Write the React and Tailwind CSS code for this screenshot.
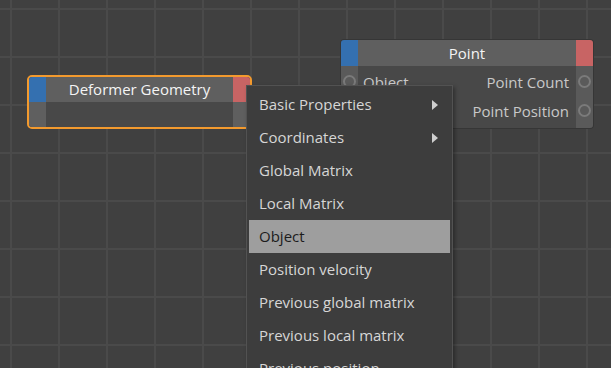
import React from "react";

const items = [
  { label: "Basic Properties", arrow: true },
  { label: "Coordinates", arrow: true },
  { label: "Global Matrix" },
  { label: "Local Matrix" },
  { label: "Object", active: true },
  { label: "Position velocity" },
  { label: "Previous global matrix" },
  { label: "Previous local matrix" },
  { label: "Previous position" },
  { label: "Previous velocity" },
];

function Port() {
  return <div className="w-[13px] h-[13px] rounded-full border-2 border-[#7a7a7a]" />;
}

export default function App() {
  return (
    <div
      className="relative w-[611px] h-[368px] overflow-hidden bg-[#404040] bg-[linear-gradient(to_right,#4a4a4a_2px,transparent_2px),linear-gradient(to_bottom,#4a4a4a_2px,transparent_2px)] bg-[size:48px_48px] bg-[position:10px_8px]"
      style={{ fontFamily: '"Open Sans", "Noto Sans", sans-serif' }}
    >
      {/* Deformer Geometry node */}
      <div className="absolute left-[27px] top-[75px] w-[225px] rounded-[5px] border-2 border-[#f39a2e] overflow-hidden">
        <div className="flex h-[25px]">
          <div className="w-[17px] bg-[#3470b0]" />
          <div className="flex-1 bg-[#5f5f5f] flex items-center justify-center text-[15px] text-[#f4f4f4]">
            Deformer Geometry
          </div>
          <div className="w-[17px] bg-[#c86464]" />
        </div>
        <div className="flex h-[25px]">
          <div className="w-[17px] bg-[#5f5f5f]" />
          <div className="flex-1 bg-[#484848]" />
          <div className="w-[17px] bg-[#5f5f5f]" />
        </div>
      </div>

      {/* Point node */}
      <div className="absolute left-[341px] top-[40px] w-[252px] rounded-[3px] overflow-hidden shadow-[0_0_0_1px_#363636]">
        <div className="flex h-[26px]">
          <div className="w-[17px] bg-[#3470b0]" />
          <div className="flex-1 bg-[#5f5f5f] flex items-center justify-center text-[15px] text-[#f4f4f4]">
            Point
          </div>
          <div className="w-[17px] bg-[#c86464]" />
        </div>
        <div className="flex h-[62px]">
          <div className="w-[17px] bg-[#5a5a5a] flex flex-col items-center pt-[9px]">
            <Port />
          </div>
          <div className="flex-1 bg-[#484848] flex flex-col py-[2px] text-[15px] text-[#c9c9c9]">
            <div className="h-[29px] flex items-center justify-between pl-[5px] pr-[7px]">
              <span>Object</span>
              <span>Point Count</span>
            </div>
            <div className="h-[29px] flex items-center justify-end pr-[7px]">
              <span>Point Position</span>
            </div>
          </div>
          <div className="w-[17px] bg-[#5a5a5a] flex flex-col items-center pt-[9px] gap-[16px]">
            <Port />
            <Port />
          </div>
        </div>
      </div>

      {/* Context menu */}
      <div className="absolute left-[246px] top-[85px] w-[207px] bg-[#3d3d3d] border border-[#525252] px-[2px] pt-[2px] shadow-[2px_2px_4px_rgba(0,0,0,0.35)]">
        {items.map((it) => (
          <div
            key={it.label}
            className={
              "h-[33px] flex items-center justify-between pl-[10px] pr-[12px] text-[15px] " +
              (it.active ? "bg-[#9e9e9e] text-[#1c1c1c]" : "text-[#d6d6d6]")
            }
          >
            <span>{it.label}</span>
            {it.arrow && (
              <svg width="6" height="10" viewBox="0 0 6 10">
                <path d="M0 0 L6 5 L0 10 Z" fill="#cfcfcf" />
              </svg>
            )}
          </div>
        ))}
      </div>
    </div>
  );
}
